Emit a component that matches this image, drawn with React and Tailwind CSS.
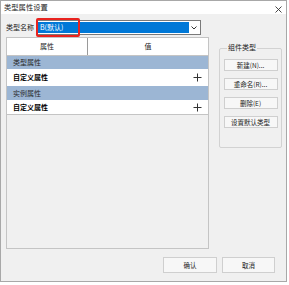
import React from "react";

function Plus() {
  return (
    <svg width="9" height="9" viewBox="0 0 9 9" className="block">
      <path d="M4.5 0.5V8.5M0.5 4.5H8.5" stroke="#333" strokeWidth="1" />
    </svg>
  );
}

function SmallBtn({ children }) {
  return (
    <div className="w-[54px] h-[12px] bg-[#f7f7f7] border border-[#cfcfcf] flex items-center justify-center text-[6.5px] text-[#222] leading-none">
      {children}
    </div>
  );
}

export default function App() {
  return (
    <div className="w-[289px] h-[285px] bg-white font-['Noto_Sans_CJK_SC','Noto_Sans',sans-serif]">
      <div className="relative w-[287px] h-[282px] border border-[#a8a8a8] bg-[#f0f0f0] flex flex-col">
        {/* title bar */}
        <div className="h-[13px] bg-white flex items-center justify-between pl-[3px] pr-[4px] shrink-0">
          <span className="text-[7.3px] text-[#222] leading-none">类型属性设置</span>
          <svg width="7" height="7" viewBox="0 0 7 7" className="mt-[3px]">
            <path d="M0.5 0.5L6.5 6.5M6.5 0.5L0.5 6.5" stroke="#333" strokeWidth="0.9" />
          </svg>
        </div>
        {/* name row */}
        <div className="flex items-center pl-[5px] pt-[6px] shrink-0">
          <span className="text-[7px] text-[#222] leading-none w-[30px]">类型名称</span>
          <div className="relative w-[165px] h-[15px] bg-white border border-[#7a7a7a] flex items-stretch p-[1px]">
            <div className="flex-1 bg-[#0078d7] flex items-center pl-[2px] text-[7px] text-white leading-none">B(默认)</div>
            <div className="w-[10px] flex items-center justify-center">
              <svg width="6" height="4" viewBox="0 0 6 4">
                <path d="M0.5 0.5L3 3L5.5 0.5" stroke="#333" strokeWidth="1" fill="none" />
              </svg>
            </div>
            <div className="absolute left-[-1px] top-[-3px] w-[44px] h-[19px] border-2 border-[#e8231f] rounded-[2px]" />
          </div>
        </div>
        {/* main */}
        <div className="flex pt-[2px] pl-[5px] shrink-0">
          <div className="w-[203px] h-[212px] border border-[#c4c4c4] flex flex-col">
            <div className="h-[18px] bg-white flex border-b border-[#c4c4c4] shrink-0">
              <div className="w-[81px] border-r border-[#9a9a9a] flex items-center justify-center text-[7px] text-[#222] leading-none">属性</div>
              <div className="flex-1 flex items-center justify-center text-[7px] text-[#222] leading-none">值</div>
            </div>
            <div className="h-[13px] bg-[#9cb6d4] flex items-center pl-[6px] text-[7px] text-[#2a2a2a] leading-none shrink-0">类型属性</div>
            <div className="h-[16px] bg-white border-t border-white flex items-center justify-between pl-[6px] pr-[6px] text-[7px] text-black font-bold leading-none shrink-0">
              <span>自定义属性</span>
              <Plus />
            </div>
            <div className="h-[15px] bg-[#9cb6d4] border-t border-white flex items-center pl-[6px] text-[7px] text-[#2a2a2a] leading-none shrink-0">实例属性</div>
            <div className="h-[15px] bg-white flex items-center justify-between pl-[6px] pr-[6px] text-[7px] text-black font-bold leading-none border-b border-[#c4c4c4] shrink-0">
              <span>自定义属性</span>
              <Plus />
            </div>
            <div className="flex-1" />
          </div>
          <div className="ml-[10px] mt-[11px] relative w-[63px] h-[100px] border border-[#d2d2d2] rounded-[2px] flex flex-col items-center pt-[10px] gap-[7px]">
            <span className="absolute left-[7px] top-[-5px] bg-[#f0f0f0] px-[1px] text-[7px] text-[#222] leading-none">组件类型</span>
            <SmallBtn>新建(N)...</SmallBtn>
            <SmallBtn>重命名(R)...</SmallBtn>
            <SmallBtn>删除(E)</SmallBtn>
            <SmallBtn>设置默认类型</SmallBtn>
          </div>
        </div>
        {/* bottom buttons */}
        <div className="flex justify-end gap-[5px] pr-[11px] pt-[8px]">
          <div className="w-[54px] h-[16px] bg-[#f7f7f7] border border-[#cfcfcf] flex items-center justify-center text-[6.5px] text-[#222] leading-none">确认</div>
          <div className="w-[53px] h-[16px] bg-[#f7f7f7] border border-[#cfcfcf] flex items-center justify-center text-[6.5px] text-[#222] leading-none">取消</div>
        </div>
      </div>
    </div>
  );
}
